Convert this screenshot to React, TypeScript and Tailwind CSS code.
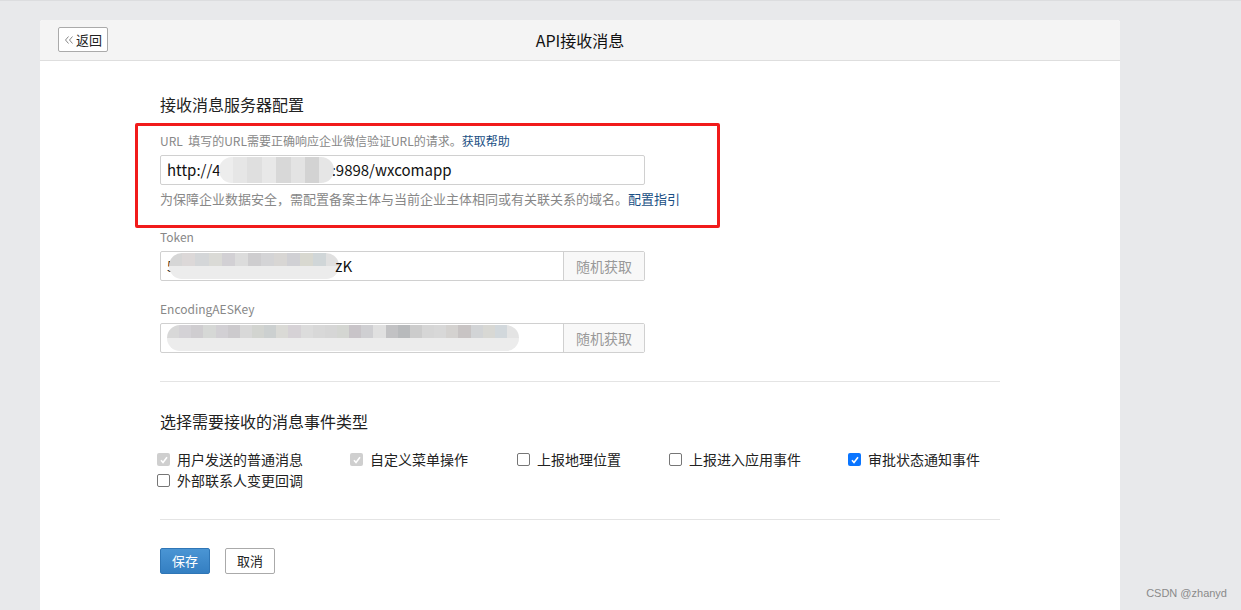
import React from "react";

type EventOption = {
  label: string;
  state: "disabled" | "off" | "on";
  width: string;
};

const events: EventOption[] = [
  { label: "用户发送的普通消息", state: "disabled", width: "w-[193px]" },
  { label: "自定义菜单操作", state: "disabled", width: "w-[167px]" },
  { label: "上报地理位置", state: "off", width: "w-[152px]" },
  { label: "上报进入应用事件", state: "off", width: "w-[179px]" },
  { label: "审批状态通知事件", state: "on", width: "w-[150px]" },
  { label: "外部联系人变更回调", state: "off", width: "w-[193px]" },
];

const Check = ({ state }: { state: EventOption["state"] }) => {
  if (state === "off") {
    return <span className="w-[13px] h-[13px] rounded-[2px] border border-[#767676] bg-white shrink-0" />;
  }
  const bg = state === "on" ? "bg-[#0a75ff]" : "bg-[#cfcfcf]";
  return (
    <span className={`w-[13px] h-[13px] rounded-[2px] ${bg} flex items-center justify-center shrink-0`}>
      <svg width="10" height="10" viewBox="0 0 10 10">
        <path d="M2 5.2 L4 7.5 L8 2.2" fill="none" stroke="white" strokeWidth="1.6" />
      </svg>
    </span>
  );
};

const Blur = ({ w, cells }: { w: string; cells: string[] }) => (
  <span className={`flex h-[26px] ${w} rounded-full overflow-hidden shrink-0`}>
    {cells.map((c, i) => (
      <span key={i} className="flex-1 flex flex-col">
        <span className="flex-1" style={{ backgroundColor: c }} />
        <span className="flex-1 bg-[#ececec]" />
      </span>
    ))}
  </span>
);

const tokenCells = ["#d6d6d6", "#dcd8d8", "#d4d6d8", "#dadad6", "#d2d0d4", "#dcdcdc", "#cecdcf", "#d4d4d6", "#d8d6d4", "#d0d0d4", "#d8d8d0", "#d0d6d8", "#e0e0e0"];
const aesCells = ["#d8d8d8", "#d4d2d6", "#cfcdd0", "#d6d8d6", "#d2d0d4", "#cccacd", "#d8d8d8", "#d2d4d0", "#ccd0d0", "#dadad6", "#d6d2d6", "#dcdcdc", "#d8d8d8", "#d6d6d6", "#d4d6d2", "#c8c4c8", "#cfcfd2", "#e0e0e0", "#c2c2c4", "#b8babc", "#cccccc", "#d6d6d6", "#d8d8d8", "#d4d2d0", "#c8c4c4", "#d2d4d6", "#d8d8d4", "#d2d8dc", "#e4e4e4"];

export default function App() {
  return (
    <div
      className="w-[1241px] h-[610px] bg-[#e8e9eb] border-t border-[#dcdddf] overflow-hidden relative"
      style={{ fontFamily: '"Microsoft YaHei", "Noto Sans CJK SC", "Liberation Sans", sans-serif' }}
    >
      <div className="ml-[40px] mt-[19px] w-[1080px] h-[600px] bg-white rounded-t-[3px] overflow-hidden">
        <div className="h-[41px] bg-[#f4f4f4] border-b border-[#dedede] flex items-center relative">
          <button className="absolute left-[18px] top-[7px] h-[25px] w-[50px] border border-[#aaaaaa] rounded-[2px] bg-white flex items-center justify-center gap-[2px] text-[13px] text-[#222]">
            <svg width="10" height="10" viewBox="0 0 10 10">
              <path d="M4.5 1.5 L1.5 5 L4.5 8.5 M8.5 1.5 L5.5 5 L8.5 8.5" fill="none" stroke="#888" strokeWidth="1" />
            </svg>
            返回
          </button>
          <div className="flex-1 text-center text-[16px] text-[#111]">API接收消息</div>
        </div>

        <div className="pl-[120px] pr-[120px] pt-[32px]">
          <div className="text-[16px] text-[#222] leading-[22px]">接收消息服务器配置</div>

          <div className="relative mt-[18px]">
            <div className="absolute left-[-25px] top-[-10px] w-[585px] h-[105px] border-[3px] border-[#f11b1b] rounded-[2px]" />
            <div className="text-[12px] text-[#888] leading-[16px]">
              URL&nbsp;&nbsp;填写的URL需要正确响应企业微信验证URL的请求。<span className="text-[#1a4f84]">获取帮助</span>
            </div>
            <div className="mt-[6px] w-[485px] h-[30px] border border-[#d0d0d0] rounded-[2px] flex items-center px-[6px] text-[15px] text-[#111]">
              http://4
              <span className="mx-[-2px] flex h-[26px] w-[115px] rounded-full overflow-hidden opacity-90">
                {["#ececec", "#e4e4e4", "#dcdcdc", "#e6e6e6", "#d4d4d4", "#e0e0e0", "#cfcfcf", "#e4e4e4"].map((c, i) => (
                  <span key={i} className="flex-1" style={{ backgroundColor: c }} />
                ))}
              </span>
              :9898/wxcomapp
            </div>
            <div className="mt-[5px] text-[13px] text-[#888] leading-[18px]">
              为保障企业数据安全，需配置备案主体与当前企业主体相同或有关联关系的域名。<span className="text-[#1a4f84]">配置指引</span>
            </div>
          </div>

          <div className="mt-[21px] text-[12px] text-[#888] leading-[16px]">Token</div>
          <div className="mt-[6px] w-[485px] h-[30px] border border-[#d0d0d0] rounded-[2px] flex">
            <div className="flex-1 flex items-center pl-[6px] text-[15px] text-[#111]">
              <span>5</span>
              <span className="-ml-[6px]"><Blur w="w-[170px]" cells={tokenCells} /></span>
              <span className="-ml-[4px]">zK</span>
            </div>
            <button className="w-[81px] border-l border-[#d0d0d0] bg-[#f8f8f8] text-[14px] text-[#999]">随机获取</button>
          </div>

          <div className="mt-[20px] text-[12px] text-[#888] leading-[16px]">EncodingAESKey</div>
          <div className="mt-[6px] w-[485px] h-[30px] border border-[#d0d0d0] rounded-[2px] flex">
            <div className="flex-1 flex items-center pl-[6px]">
              <Blur w="w-[352px]" cells={aesCells} />
            </div>
            <button className="w-[81px] border-l border-[#d0d0d0] bg-[#f8f8f8] text-[14px] text-[#999]">随机获取</button>
          </div>

          <div className="mt-[28px] w-[840px] border-t border-[#e4e4e4]" />

          <div className="mt-[28px] text-[16px] text-[#222] leading-[22px]">选择需要接收的消息事件类型</div>

          <div className="mt-[18px] flex flex-wrap w-[870px] -ml-[3px] gap-y-[2px]">
            {events.map((e) => (
              <label key={e.label} className={`${e.width} flex items-center gap-[7px] text-[14px] text-[#222] leading-[19px]`}>
                <Check state={e.state} />
                {e.label}
              </label>
            ))}
          </div>

          <div className="mt-[29px] w-[840px] border-t border-[#e4e4e4]" />

          <div className="mt-[28px] flex gap-[15px]">
            <button className="w-[50px] h-[26px] rounded-[2px] bg-gradient-to-b from-[#4a95d4] to-[#347fc2] border border-[#2f76b6] text-white text-[13px]">保存</button>
            <button className="w-[50px] h-[26px] rounded-[2px] bg-white border border-[#aaaaaa] text-[#222] text-[13px]">取消</button>
          </div>
        </div>
      </div>

      <div className="absolute right-[14px] bottom-[9px] text-[11px] text-[#8a8a8a]" style={{ fontFamily: '"Liberation Sans", Arial, sans-serif' }}>
        CSDN @zhanyd
      </div>
    </div>
  );
}
